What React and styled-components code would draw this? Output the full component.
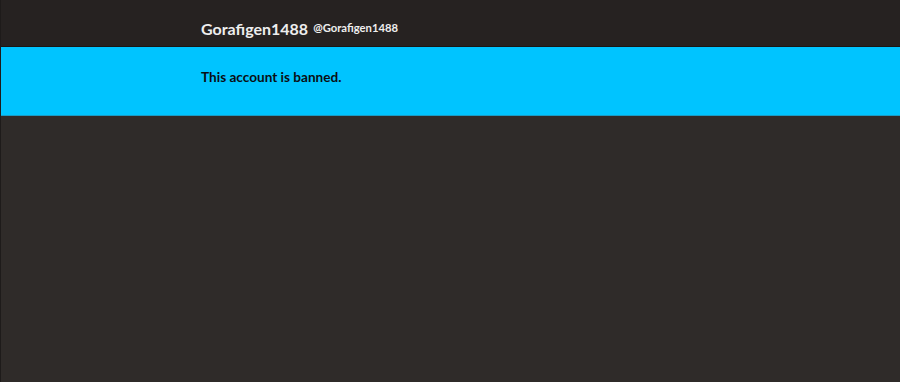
import React from "react";
import styled, { createGlobalStyle } from "styled-components";

const Global = createGlobalStyle`
  html, body { margin: 0; padding: 0; background: #2f2b29; height: 100%; }
  #root { min-height: 100vh; }
  * { box-sizing: border-box; }
`;

const Page = styled.div`
  min-height: 100vh;
  background: #2f2b29;
  border-left: 1px solid #1e1b1a;
  font-family: Lato, "Open Sans", sans-serif;
`;

const Header = styled.header`
  height: 47px;
  background: #262221;
  border-bottom: 1px solid #1a1716;
  padding-left: 200px;
  display: flex;
  align-items: flex-end;
  padding-bottom: 9px;
`;

const Name = styled.span`
  color: #eeeeee;
  font-weight: 700;
  font-size: 16px;
  line-height: 1;
`;

const Handle = styled.span`
  color: #eeeeee;
  font-weight: 700;
  font-size: 11.25px;
  margin-left: 5px;
  line-height: 1;
  position: relative;
  top: -4px;
`;

const Banner = styled.div`
  height: 69px;
  background: #00c4ff;
  border-bottom: 1px solid #1a9bc4;
  padding-left: 200px;
  padding-top: 21px;
`;

const BannerText = styled.div`
  color: #0a0f14;
  font-weight: 700;
  font-size: 13.6px;
  line-height: 1.4;
`;

export default function App() {
  return (
    <>
      <Global />
      <Page>
        <Header>
          <Name>Gorafigen1488</Name>
          <Handle>@Gorafigen1488</Handle>
        </Header>
        <Banner>
          <BannerText>This account is banned.</BannerText>
        </Banner>
      </Page>
    </>
  );
}
